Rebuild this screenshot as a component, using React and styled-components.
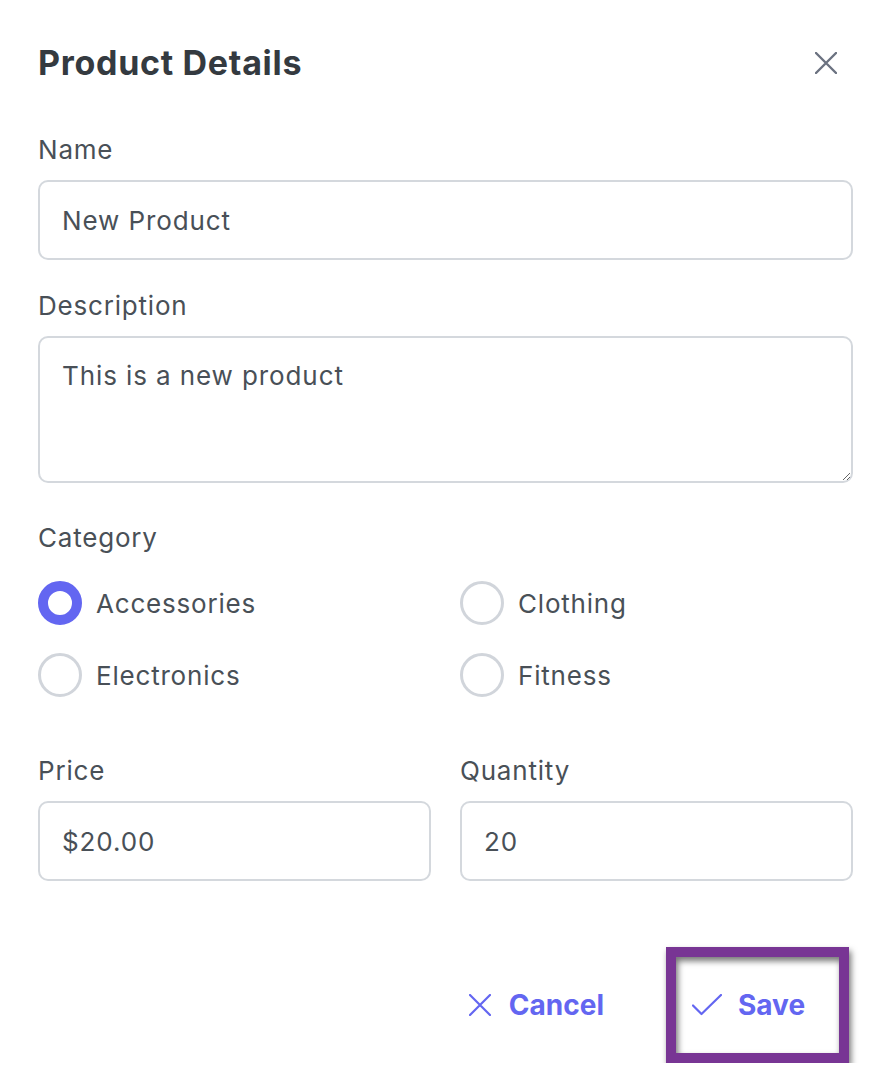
import styled, { createGlobalStyle } from "styled-components";

const GlobalStyle = createGlobalStyle`
    * { box-sizing: border-box; }
    body {
        margin: 0;
        background: #ffffff;
        font-family: Inter, "Noto Sans", "Liberation Sans", sans-serif;
    }
`

const categories = [
    { id: "accessories", label: "Accessories" },
    { id: "clothing", label: "Clothing" },
    { id: "electronics", label: "Electronics" },
    { id: "fitness", label: "Fitness" },
]

const CloseIcon = ({ size = 22, stroke = "#6b7280", width = 2.4 }) => (
    <svg width={size} height={size} viewBox="0 0 22 22" fill="none">
        <path d="M1 1L21 21M21 1L1 21" stroke={stroke} strokeWidth={width} strokeLinecap="round" />
    </svg>
)

const CheckIcon = () => (
    <svg width="30" height="22" viewBox="0 0 30 22" fill="none">
        <path d="M1 11.5L9.5 20L29 1" stroke="#6366f1" strokeWidth="2.2" strokeLinecap="round" strokeLinejoin="round" />
    </svg>
)

const App = () => {
    const selected = "accessories"
    return (
        <>
            <GlobalStyle />
            <Panel>
                <Header>
                    <Title>Product Details</Title>
                    <IconButton aria-label="Close">
                        <CloseIcon />
                    </IconButton>
                </Header>

                <Field>
                    <Label>Name</Label>
                    <Input defaultValue="New Product" />
                </Field>

                <Field $space={37}>
                    <Label>Description</Label>
                    <TextArea defaultValue="This is a new product" />
                </Field>

                <Field>
                    <Label>Category</Label>
                    <RadioGrid>
                        {categories.map((c) => (
                            <RadioItem key={c.id}>
                                <Radio $checked={c.id === selected} />
                                <span>{c.label}</span>
                            </RadioItem>
                        ))}
                    </RadioGrid>
                </Field>

                <TwoCols>
                    <Field>
                        <Label>Price</Label>
                        <Input defaultValue="$20.00" />
                    </Field>
                    <Field>
                        <Label>Quantity</Label>
                        <Input defaultValue="20" />
                    </Field>
                </TwoCols>

                <Footer>
                    <TextButton>
                        <CloseIcon stroke="#6366f1" width={2.2} />
                        Cancel
                    </TextButton>
                    <SaveButton>
                        <CheckIcon />
                        Save
                    </SaveButton>
                </Footer>
            </Panel>
        </>
    )
}

const Panel = styled.div`
    width: 890px;
    padding: 43px 37px 0 38px;
`
const Header = styled.div`
    display: flex;
    align-items: center;
    justify-content: space-between;
    margin-bottom: 49px;
`
const Title = styled.h1`
    margin: 0;
    font-size: 34px;
    line-height: 40px;
    font-weight: 700;
    color: #343a40;
    letter-spacing: 0.7px;
`
const IconButton = styled.button`
    display: flex;
    align-items: center;
    justify-content: center;
    padding: 0;
    margin-right: 16px;
    border: none;
    background: none;
    cursor: pointer;
`
const Field = styled.div`
    display: flex;
    flex-direction: column;
    margin-bottom: ${(p) => p.$space ?? 28}px;
`
const Label = styled.label`
    font-size: 26px;
    line-height: 36px;
    letter-spacing: 0.8px;
    color: #495057;
    margin-bottom: 12px;
`
const Input = styled.input`
    height: 80px;
    width: 100%;
    padding: 0 22px;
    border: 2px solid #d4d8dd;
    border-radius: 10px;
    font-family: inherit;
    font-size: 26px;
    letter-spacing: 0.9px;
    color: #495057;
    background: #fff;
    outline: none;
`
const TextArea = styled.textarea`
    height: 147px;
    width: 100%;
    padding: 18px 22px;
    border: 2px solid #d4d8dd;
    border-radius: 10px;
    font-family: inherit;
    font-size: 26px;
    line-height: 39px;
    letter-spacing: 0.9px;
    color: #495057;
    background: #fff;
    outline: none;
    resize: vertical;
`
const RadioGrid = styled.div`
    display: grid;
    grid-template-columns: 1fr 1fr;
    column-gap: 29px;
    row-gap: 28px;
    margin-top: 13px;
    margin-bottom: 28px;
`
const RadioItem = styled.label`
    display: flex;
    align-items: center;
    gap: 14px;
    font-size: 26px;
    letter-spacing: 0.8px;
    color: #495057;
    cursor: pointer;
`
const Radio = styled.span`
    width: 44px;
    height: 44px;
    border-radius: 50%;
    flex-shrink: 0;
    background: #fff;
    border: ${(p) => (p.$checked ? "10px solid #6366f1" : "3px solid #d1d5db")};
`
const TwoCols = styled.div`
    display: grid;
    grid-template-columns: 1fr 1fr;
    column-gap: 29px;
`
const Footer = styled.div`
    display: flex;
    align-items: center;
    justify-content: flex-end;
    gap: 62px;
    margin-top: 38px;
    margin-right: 4px;
`
const TextButton = styled.button`
    display: flex;
    align-items: center;
    gap: 18px;
    padding: 0;
    border: none;
    background: none;
    font-family: inherit;
    font-size: 28px;
    font-weight: 700;
    color: #6366f1;
    cursor: pointer;
`
const SaveButton = styled(TextButton)`
    position: relative;
    gap: 16px;
    width: 183px;
    height: 116px;
    padding: 0 0 0 26px;

    &::after {
        content: "";
        position: absolute;
        inset: 0;
        border: 10px solid #783594;
        filter: drop-shadow(2px 4px 3px rgba(0, 0, 0, 0.55));
        pointer-events: none;
    }
`

export default App;
